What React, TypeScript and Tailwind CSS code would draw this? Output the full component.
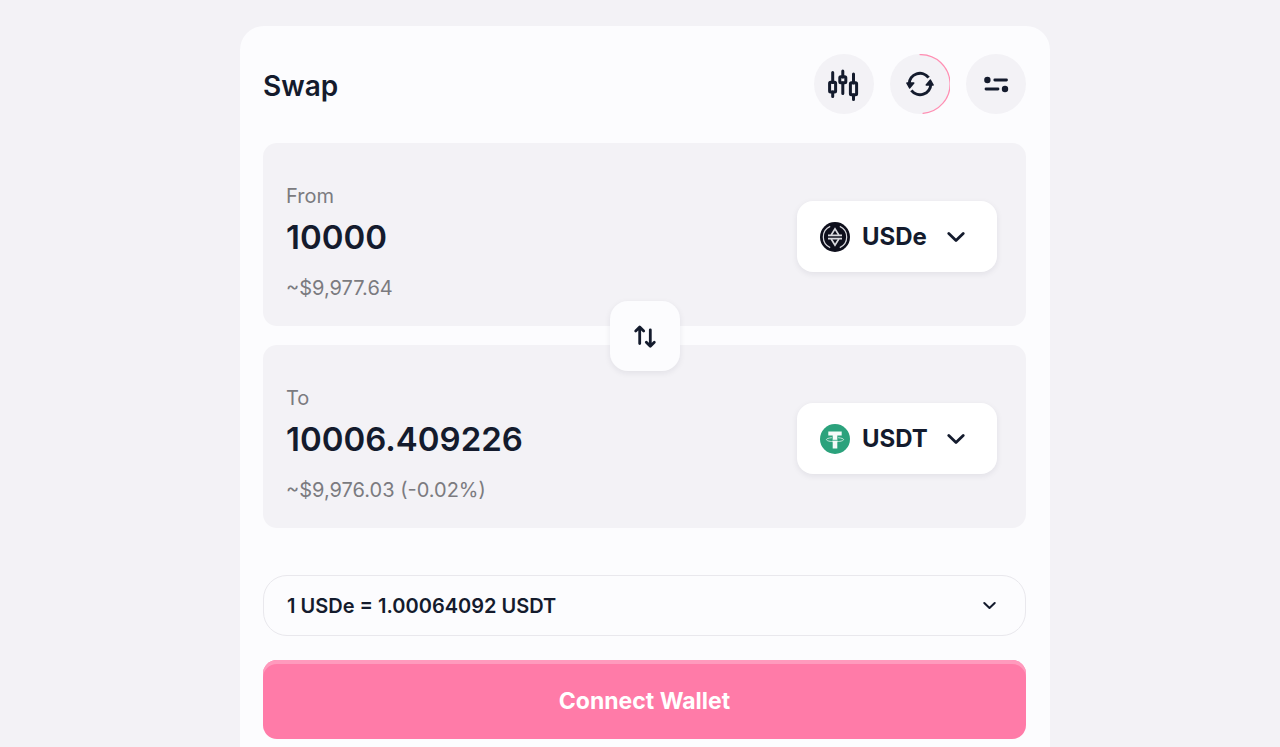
import React, { useState } from "react";

const tokens = {
  usde: { symbol: "USDe", icon: <UsdeIcon /> },
  usdt: { symbol: "USDT", icon: <UsdtIcon /> },
};

function UsdeIcon() {
  return (
    <svg viewBox="0 0 30 30" className="size-[30px]" fill="none" aria-hidden="true">
      <circle cx="15" cy="15" r="15" fill="#0e0f1c" />
      <g stroke="#d9d9de">
        <path d="M10.2 4.4a11.6 11.6 0 0 0 0 21.2M19.8 4.4a11.6 11.6 0 0 1 0 21.2" strokeWidth="1.2" />
        <path d="M8 13.3h14M8 16.7h14" strokeWidth="1.7" />
        <path d="M11.2 13 15 6.8l3.8 6.2M11.2 17l3.8 6.2 3.8-6.2" strokeWidth="1.7" />
      </g>
    </svg>
  );
}

function UsdtIcon() {
  return (
    <svg viewBox="0 0 30 30" className="size-[30px]" fill="none" aria-hidden="true">
      <circle cx="15" cy="15" r="15" fill="#2ba27c" />
      <path
        d="M18.2 13.7c3.200.3 5.400 1 5.400 1.900 0 1.200-3.800 2.100-8.600 2.100s-8.600-.9-8.600-2.100c0-.9 2.200-1.600 5.400-1.900"
        stroke="#c3e4d9"
        strokeWidth="1"
      />
      <path d="M8.3 7.500h13.400v4h-4.400v13h-4.600v-13H8.300z" fill="#f4faf8" />
      <path d="M12.700 16.300h4.600" stroke="#2ba27c" strokeWidth="0.8" />
    </svg>
  );
}

const Chevron = ({ className }) => (
  <svg viewBox="0 0 18 12" className={className} fill="none" aria-hidden="true">
    <path
      d="M1.8 2.5 9 9.5l7.2-7"
      stroke="currentColor"
      strokeWidth="2.8"
      strokeLinecap="round"
      strokeLinejoin="round"
    />
  </svg>
);

const RoundButton = ({ label, children }) => (
  <button
    type="button"
    aria-label={label}
    className="size-[60px] rounded-full bg-[#f3f2f6] cursor-pointer"
  >
    <svg
      viewBox="0 0 60 60"
      className="size-full"
      fill="none"
      stroke="currentColor"
      strokeLinecap="round"
      strokeLinejoin="round"
    >
      {children}
    </svg>
  </button>
);

const AmountPanel = ({ id, label, value, onChange, usd, token }) => {
  return (
    <div className="flex items-center justify-between rounded-[14px] bg-[#f3f2f6] pt-7 pb-6 pl-[23px] pr-[29px]">
      <div className="min-w-0 flex-1 pt-[11px]">
        <label htmlFor={id} className="block text-[20px] leading-7 text-[#7b7b80]">
          {label}
        </label>
        <input
          id={id}
          value={value}
          readOnly={!onChange}
          onChange={onChange}
          className="block h-[54px] w-full bg-transparent text-[33px] font-semibold outline-none"
        />
        <p className="mt-[10px] text-[20px] leading-7 text-[#7b7b80]">{usd}</p>
      </div>
      <button
        type="button"
        aria-haspopup="listbox"
        className="flex h-[71px] w-[200px] items-center rounded-2xl bg-white pl-[23px] pr-8 shadow-[0_2px_6px_rgba(20,20,50,0.08)] cursor-pointer"
      >
        {token.icon}
        <span className="ml-3 text-[24px] font-bold">{token.symbol}</span>
        <Chevron className="ml-auto h-3 w-[18px]" />
      </button>
    </div>
  );
};

const App = () => {
  const [amount, setAmount] = useState("10000");

  return (
    <main className="flex min-h-screen flex-col items-center bg-[#f3f2f6] pt-[26px] pl-[10px] font-[Inter,sans-serif] text-[#141b2d]">
      <section className="w-full max-w-[810px] flex-1 rounded-t-3xl bg-[#fcfcfe] pl-[23px] pr-6 pt-7 pb-2">
        <header className="flex items-center justify-between">
          <h1 className="pt-1 text-[28px] font-semibold">Swap</h1>
          <div className="flex gap-4">
            <RoundButton label="Chart">
              <g strokeWidth="3">
                <path d="M18.7 18.5v10M18.7 38v4.5M28.8 17v6M28.8 29v10.5M39.5 20v9M39.5 41v4.5" />
                <rect x="15.6" y="28.3" width="6" height="9.6" rx="1" />
                <rect x="25.8" y="22.8" width="6" height="6" rx="1" />
                <rect x="36.4" y="28.8" width="6.2" height="12" rx="1" />
              </g>
            </RoundButton>
            <RoundButton label="Refresh">
              <path d="M30 .6a29.4 29.4 0 0 1 3 58.7" stroke="#ff8fb3" strokeWidth="1.2" />
              <g strokeWidth="3" strokeLinecap="butt">
                <path d="M19.2 30A10.8 10.8 0 0 1 38.6 23.6" />
                <path d="M40.800 30A10.8 10.8 0 0 1 21.4 36.4" />
              </g>
              <g fill="currentColor" strokeWidth="1.4">
                <path d="M16.8 29h7l-4.2 5z" />
                <path d="M43.2 31h-7l4.2-5z" />
              </g>
            </RoundButton>
            <RoundButton label="Settings">
              <g strokeWidth="2.8">
                <path d="M28.8 26h11.7M20 35h12" />
                <circle cx="21.4" cy="26" r="3.2" fill="currentColor" stroke="none" />
                <circle cx="39" cy="35" r="3.2" fill="currentColor" stroke="none" />
              </g>
            </RoundButton>
          </div>
        </header>

        <div className="relative mt-[29px] flex flex-col gap-[19px]">
          <AmountPanel
            id="from"
            label="From"
            value={amount}
            onChange={(e) => setAmount(e.target.value)}
            usd="~$9,977.64"
            token={tokens.usde}
          />
          <AmountPanel
            id="to"
            label="To"
            value="10006.409226"
            onChange={undefined}
            usd="~$9,976.03 (-0.02%)"
            token={tokens.usdt}
          />
          <button
            type="button"
            aria-label="Switch tokens"
            className="absolute top-1/2 left-1/2 size-[70px] -translate-x-1/2 -translate-y-1/2 rounded-[18px] bg-[#fcfcfe] shadow-[0_2px_6px_rgba(20,20,50,0.08)] cursor-pointer"
          >
            <svg
              viewBox="0 0 70 70"
              className="size-full"
              fill="none"
              stroke="currentColor"
              strokeWidth="2.8"
              strokeLinecap="round"
              strokeLinejoin="round"
            >
              <path d="M29.7 42.5v-16M25.7 30l4-4 4 4" />
              <path d="M40.3 28.8v16M36.3 41.3l4 4 4-4" />
            </svg>
          </button>
        </div>

        <button
          type="button"
          aria-expanded="false"
          className="mt-[47px] flex h-[61px] w-full items-center justify-between rounded-3xl border border-[#e9e8ed] pl-[23px] pr-[29px] cursor-pointer"
        >
          <span className="text-[20px] font-semibold">1 USDe = 1.00064092 USDT</span>
          <Chevron className="h-[9px] w-[13px]" />
        </button>

        <button
          type="button"
          className="mt-6 h-[79px] w-full rounded-[14px] bg-[#ff7ba8] pt-1 text-[23px] font-bold text-white shadow-[inset_0_4px_0_#ff9abd] cursor-pointer"
        >
          Connect Wallet
        </button>
      </section>
    </main>
  );
};

export default App;
